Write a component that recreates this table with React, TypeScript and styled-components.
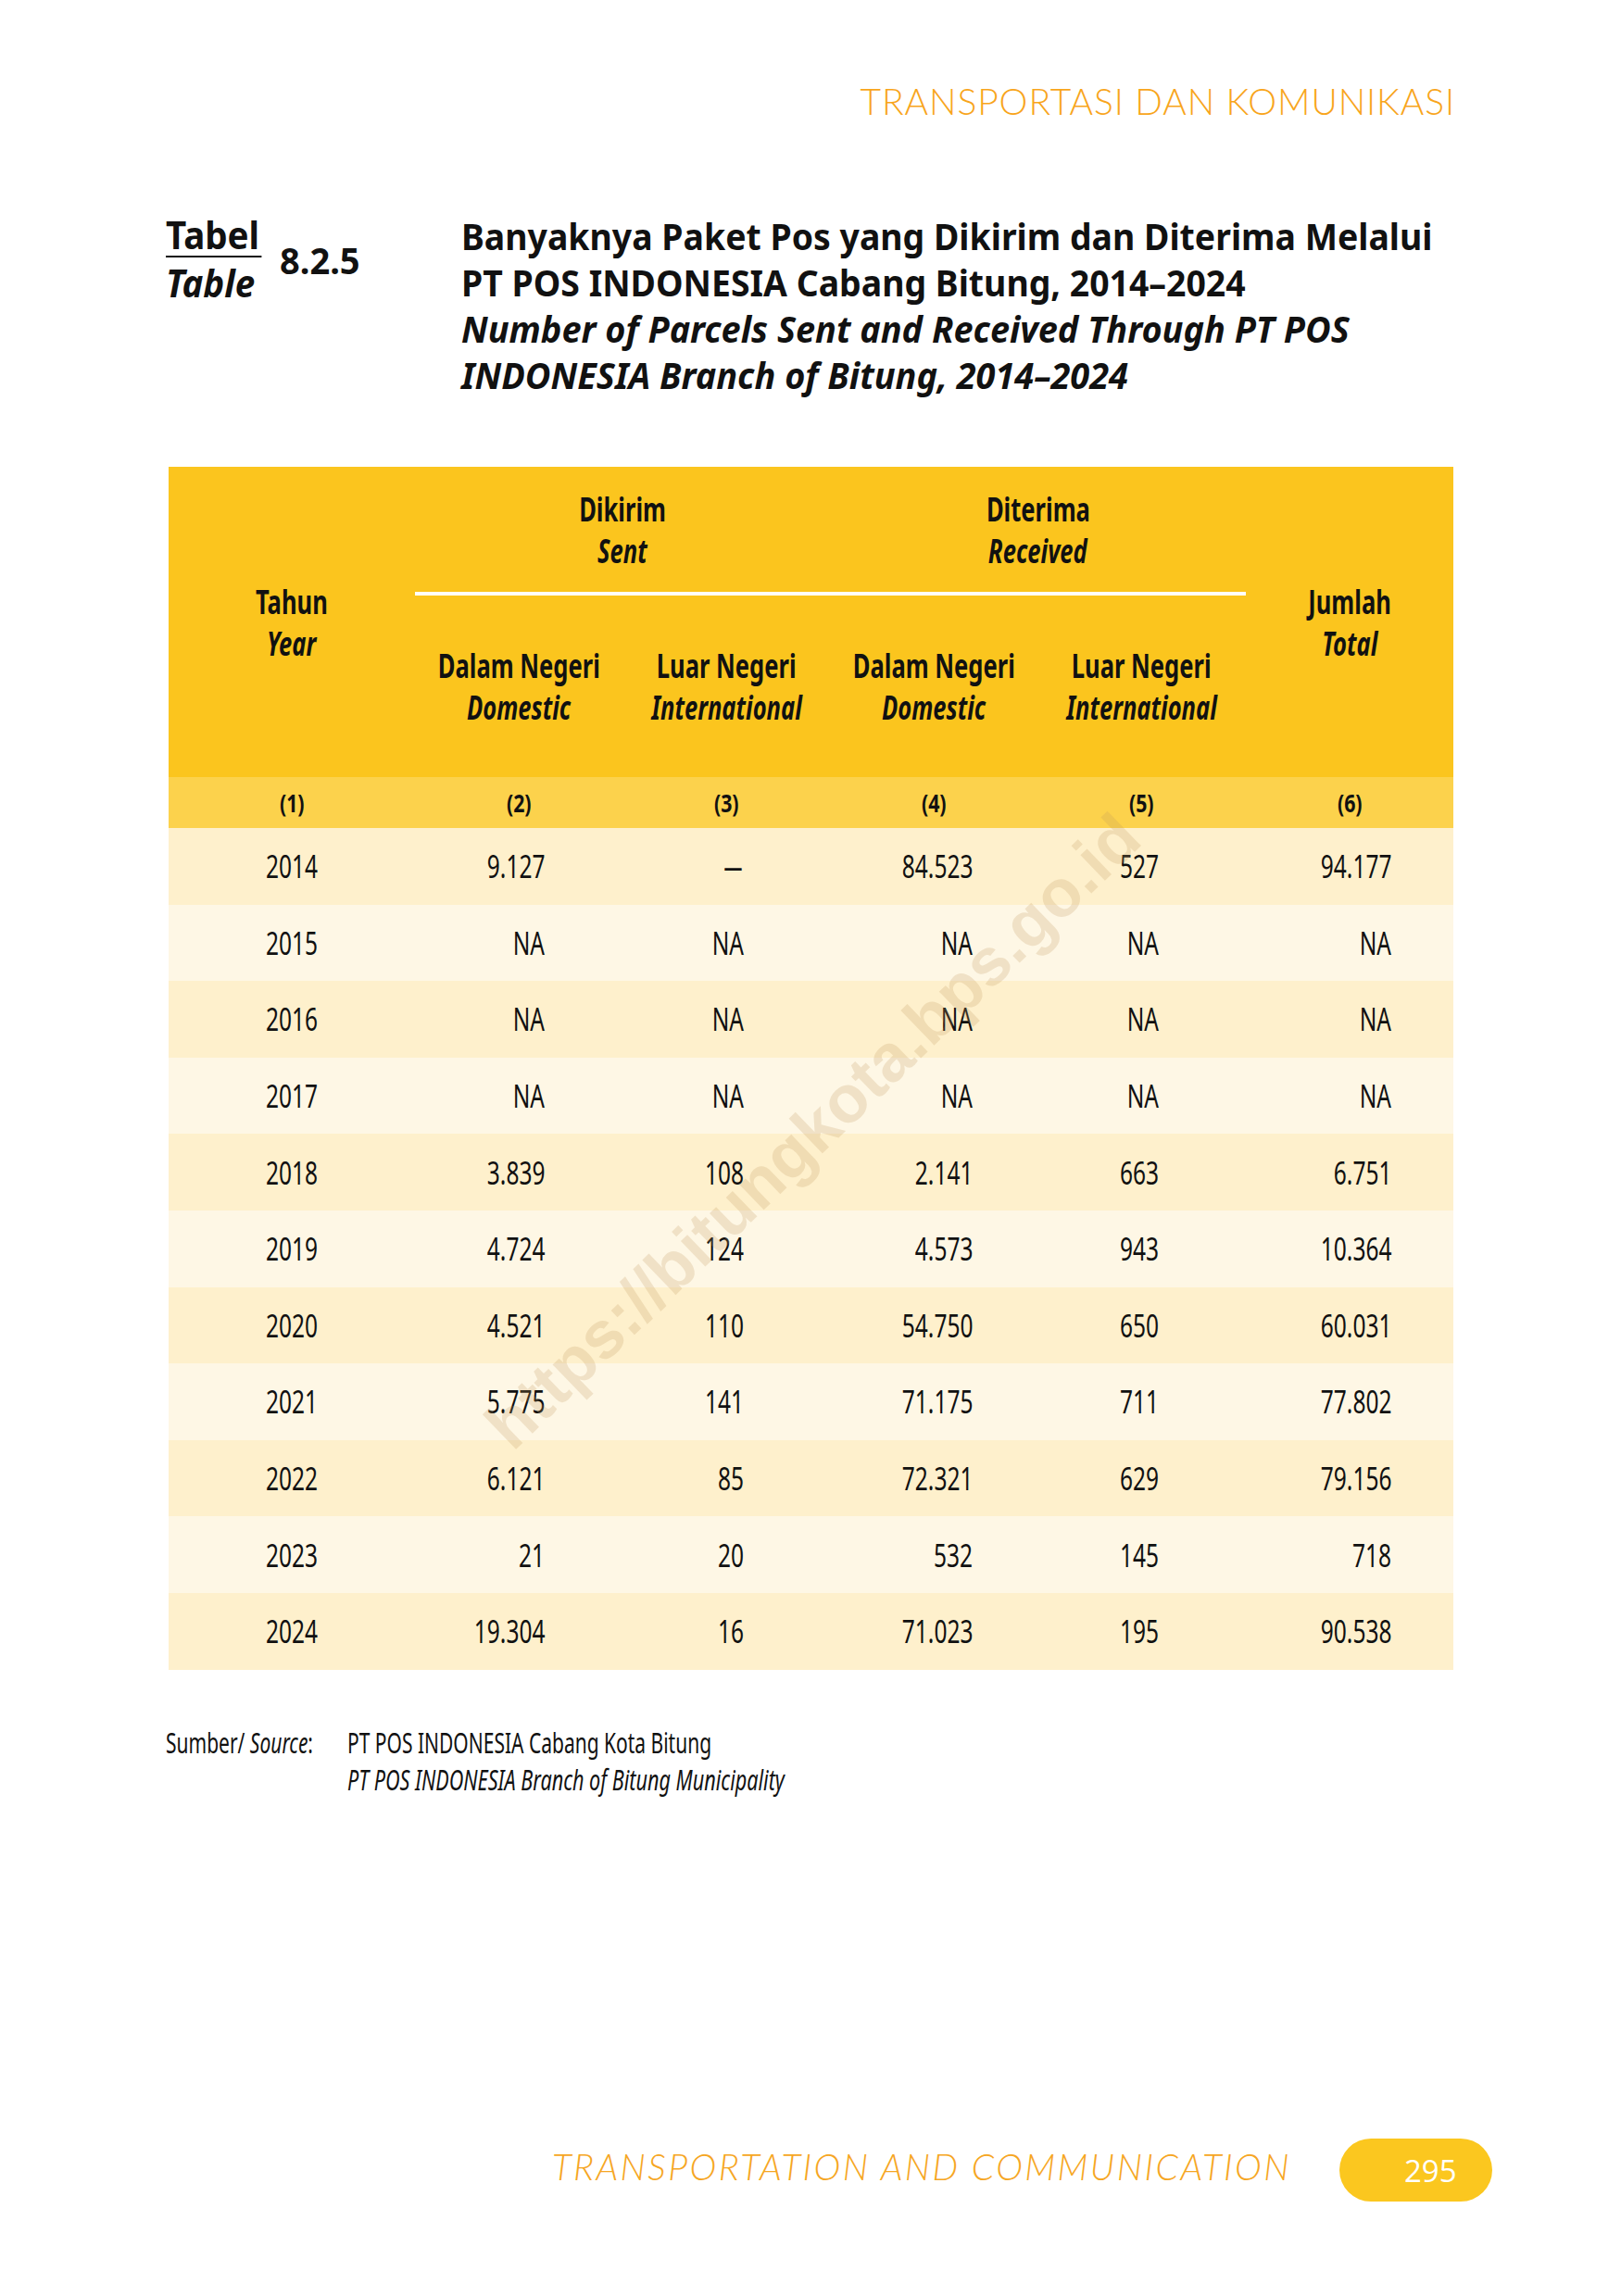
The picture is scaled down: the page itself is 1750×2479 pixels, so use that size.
import React from "react";
import styled, { createGlobalStyle } from "styled-components";

const SANS = `"Noto Sans", "Open Sans", "DejaVu Sans", sans-serif`;

const GlobalStyle = createGlobalStyle`
  html, body { margin: 0; padding: 0; background: #ffffff; }
  body { font-family: ${SANS}; color: #111111; }
`;

/* Narrow face imitation: the reference uses a condensed sans that is not installed */
const Squeeze = styled.span<{ $x: number; $o?: string }>`
  display: inline-block;
  white-space: nowrap;
  transform: scaleX(${(p) => p.$x});
  transform-origin: ${(p) => p.$o ?? "center"};
`;

const Page = styled.div`
  position: relative;
  width: 1750px;
  height: 2479px;
  display: flex;
  flex-direction: column;
  overflow: hidden;
  background: #ffffff;
`;

const RunningHead = styled.div`
  padding: 85px 179px 0 0;
  text-align: right;
  font-family: Lato, "Open Sans", sans-serif;
  font-weight: 300;
  font-size: 39px;
  line-height: 48px;
  letter-spacing: 0.9px;
  color: #f8a51c;
`;

const TitleRow = styled.div`
  display: flex;
  align-items: flex-start;
  margin: 97px 0 0 179px;
  font-family: ${SANS};
  font-weight: 700;
  color: #111111;
`;

const LabelCol = styled.div`
  flex: 0 0 123px;
  display: flex;
  flex-direction: column;
  align-items: flex-start;
`;

const LabelWord = styled.span<{ $italic?: boolean; $rule?: boolean }>`
  display: block;
  font-size: 41px;
  line-height: 46px;
  font-style: ${(p) => (p.$italic ? "italic" : "normal")};
  border-bottom: ${(p) => (p.$rule ? "2px solid #111" : "none")};
  margin-top: ${(p) => (p.$italic ? "4px" : "0")};
  padding-right: 2px;
  transform: scaleX(0.94);
  transform-origin: left center;
`;

const TableNo = styled.div`
  flex: 0 0 196px;
  padding-top: 26px;
  font-size: 40px;
  line-height: 50px;
`;

const TitleText = styled.div`
  font-size: 40px;
  line-height: 50px;
`;

const TitleLine = styled.div<{ $italic?: boolean }>`
  font-style: ${(p) => (p.$italic ? "italic" : "normal")};
  white-space: nowrap;
`;

const Table = styled.table`
  margin: 74px 0 0 182px;
  width: 1387px;
  border-collapse: separate;
  border-spacing: 0;
  table-layout: fixed;
  font-family: ${SANS};
  color: #111111;
`;

const Col = styled.col<{ $w: number }>`
  width: ${(p) => p.$w}px;
`;

const HeadRow = styled.tr<{ $h: number }>`
  height: ${(p) => p.$h}px;
`;

const HeadCell = styled.th<{ $rule?: boolean }>`
  background: #fbc51e;
  font-weight: 700;
  font-size: 36px;
  line-height: 45px;
  vertical-align: middle;
  padding: 0;
  border-bottom: ${(p) => (p.$rule ? "4px solid #ffffff" : "0")};
`;

const HeadStack = styled.div`
  display: flex;
  flex-direction: column;
  align-items: center;
`;

const Eng = styled(Squeeze)`
  font-style: italic;
`;

const NumRow = styled.tr`
  height: 55px;
`;

const NumCell = styled.th`
  background: #fcd24c;
  font-weight: 700;
  font-size: 26px;
  line-height: 30px;
  text-align: center;
  vertical-align: middle;
  padding: 0;
`;

const DataRow = styled.tr<{ $alt: boolean }>`
  height: 82.6px;
  background: ${(p) => (p.$alt ? "#fef7e5" : "#fef0cc")};
`;

const Cell = styled.td<{ $pr?: number; $center?: boolean }>`
  font-size: 35px;
  line-height: 38px;
  font-weight: 400;
  text-align: ${(p) => (p.$center ? "center" : "right")};
  padding: 0 ${(p) => (p.$center ? 0 : p.$pr ?? 0)}px 0 0;
  vertical-align: middle;
`;

const Source = styled.div`
  display: grid;
  grid-template-columns: 196px auto;
  margin: 59px 0 0 179px;
  font-family: ${SANS};
  font-size: 30px;
  line-height: 40px;
  color: #111111;
`;

const SourceLabel = styled.div``;

const SourceValue = styled.div`
  display: flex;
  flex-direction: column;
  align-items: flex-start;
`;

const Ital = styled.span`
  font-style: italic;
`;

const Footer = styled.div`
  margin-top: auto;
  padding: 0 139px 102px 0;
  display: flex;
  justify-content: flex-end;
  align-items: center;
  gap: 52px;
`;

const FooterText = styled.div`
  font-family: Lato, "Open Sans", sans-serif;
  font-style: italic;
  font-weight: 300;
  font-size: 39px;
  letter-spacing: 2.4px;
  color: #f6a623;
  margin-bottom: 8px;
`;

const PageBadge = styled.div`
  width: 165px;
  height: 68px;
  border-radius: 34px;
  background: #fbc71f;
  display: flex;
  align-items: center;
  padding-left: 70px;
  box-sizing: border-box;
  font-family: "Open Sans", sans-serif;
  font-size: 33px;
  color: #ffffff;
`;

const Watermark = styled.div`
  position: absolute;
  left: 877px;
  top: 1221px;
  transform: translate(-50%, -50%) rotate(-44deg);
  font-family: "Liberation Sans", Arial, sans-serif;
  font-weight: 700;
  font-size: 72px;
  color: rgba(190, 150, 90, 0.22);
  white-space: nowrap;
  pointer-events: none;
`;

type Row = [string, string, string, string, string, string];

const rows: Row[] = [
  ["2014", "9.127", "–", "84.523", "527", "94.177"],
  ["2015", "NA", "NA", "NA", "NA", "NA"],
  ["2016", "NA", "NA", "NA", "NA", "NA"],
  ["2017", "NA", "NA", "NA", "NA", "NA"],
  ["2018", "3.839", "108", "2.141", "663", "6.751"],
  ["2019", "4.724", "124", "4.573", "943", "10.364"],
  ["2020", "4.521", "110", "54.750", "650", "60.031"],
  ["2021", "5.775", "141", "71.175", "711", "77.802"],
  ["2022", "6.121", "85", "72.321", "629", "79.156"],
  ["2023", "21", "20", "532", "145", "718"],
  ["2024", "19.304", "16", "71.023", "195", "90.538"],
];

const colWidths = [266, 224, 224, 224, 225, 224];
const padRight = [0, 84, 93, 70, 94, 67];

const HX = 0.71;
const TX = 0.935;

function Head({ id, en }: { id: string; en: string }) {
  return (
    <HeadStack>
      <Squeeze $x={HX}>{id}</Squeeze>
      <Eng $x={HX}>{en}</Eng>
    </HeadStack>
  );
}

const titleLines: { text: string; italic: boolean }[] = [
  { text: "Banyaknya Paket Pos yang Dikirim dan Diterima Melalui", italic: false },
  { text: "PT POS INDONESIA Cabang Bitung, 2014–2024", italic: false },
  { text: "Number of Parcels Sent and Received Through PT POS", italic: true },
  { text: "INDONESIA Branch of Bitung, 2014–2024", italic: true },
];

export default function App() {
  return (
    <Page>
      <GlobalStyle />
      <RunningHead>TRANSPORTASI DAN KOMUNIKASI</RunningHead>

      <TitleRow>
        <LabelCol>
          <LabelWord $rule>Tabel</LabelWord>
          <LabelWord $italic>Table</LabelWord>
        </LabelCol>
        <TableNo>
          <Squeeze $x={0.95} $o="left center">8.2.5</Squeeze>
        </TableNo>
        <TitleText>
          {titleLines.map((l) => (
            <TitleLine key={l.text} $italic={l.italic}>
              <Squeeze $x={l.italic ? TX + 0.012 : TX} $o="left center">
                {l.text}
              </Squeeze>
            </TitleLine>
          ))}
        </TitleText>
      </TitleRow>

      <Table>
        <colgroup>
          {colWidths.map((w, i) => (
            <Col key={i} $w={w} />
          ))}
        </colgroup>
        <thead>
          <HeadRow $h={139}>
            <HeadCell rowSpan={2}>
              <Head id="Tahun" en="Year" />
            </HeadCell>
            <HeadCell colSpan={2} $rule>
              <Head id="Dikirim" en="Sent" />
            </HeadCell>
            <HeadCell colSpan={2} $rule>
              <Head id="Diterima" en="Received" />
            </HeadCell>
            <HeadCell rowSpan={2}>
              <Head id="Jumlah" en="Total" />
            </HeadCell>
          </HeadRow>
          <HeadRow $h={196}>
            <HeadCell>
              <Head id="Dalam Negeri" en="Domestic" />
            </HeadCell>
            <HeadCell>
              <Head id="Luar Negeri" en="International" />
            </HeadCell>
            <HeadCell>
              <Head id="Dalam Negeri" en="Domestic" />
            </HeadCell>
            <HeadCell>
              <Head id="Luar Negeri" en="International" />
            </HeadCell>
          </HeadRow>
          <NumRow>
            {[1, 2, 3, 4, 5, 6].map((n) => (
              <NumCell key={n}>
                <Squeeze $x={0.82}>({n})</Squeeze>
              </NumCell>
            ))}
          </NumRow>
        </thead>
        <tbody>
          {rows.map((r, ri) => (
            <DataRow key={r[0]} $alt={ri % 2 === 1}>
              {r.map((v, ci) => (
                <Cell key={ci} $center={ci === 0} $pr={padRight[ci]}>
                  <Squeeze $x={v === "–" ? 1.25 : 0.7} $o={ci === 0 ? "center" : "right center"}>
                    {v}
                  </Squeeze>
                </Cell>
              ))}
            </DataRow>
          ))}
        </tbody>
      </Table>

      <Source>
        <SourceLabel>
          <Squeeze $x={0.7} $o="left center">
            Sumber/ <Ital>Source</Ital>:
          </Squeeze>
        </SourceLabel>
        <SourceValue>
          <Squeeze $x={0.7} $o="left center">PT POS INDONESIA Cabang Kota Bitung</Squeeze>
          <Squeeze $x={0.72} $o="left center">
            <Ital>PT POS INDONESIA Branch of Bitung Municipality</Ital>
          </Squeeze>
        </SourceValue>
      </Source>

      <Footer>
        <FooterText>TRANSPORTATION AND COMMUNICATION</FooterText>
        <PageBadge>295</PageBadge>
      </Footer>

      <Watermark>https://bitungkota.bps.go.id</Watermark>
    </Page>
  );
}
